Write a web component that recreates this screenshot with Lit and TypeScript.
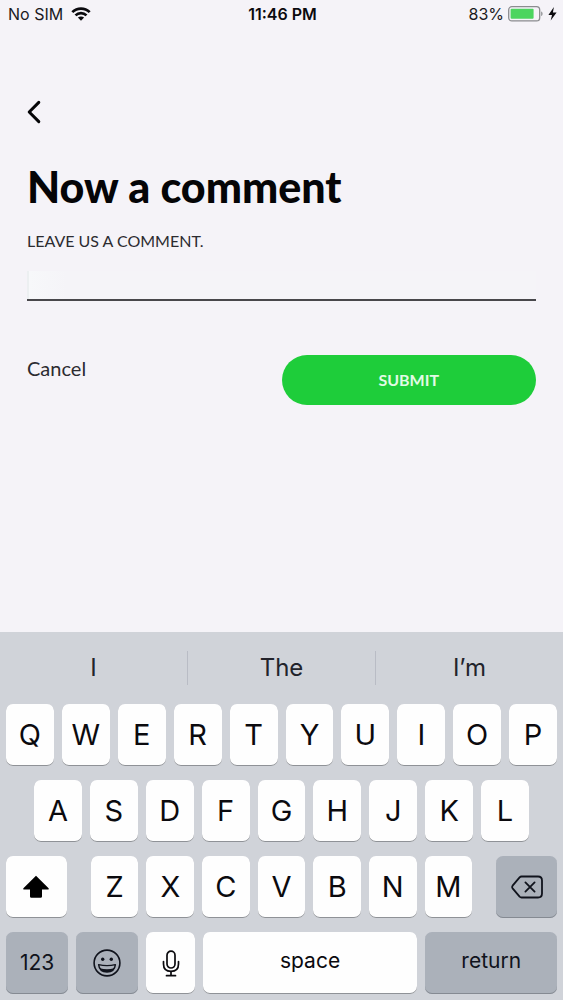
import { LitElement, html, css } from "lit";
import { customElement, property } from "lit/decorators.js";

const wifiIcon = html`<svg class="wifi" viewBox="0 0 20 14" width="20" height="14" aria-hidden="true">
  <g fill="none" stroke="#0b0a0e" stroke-width="2.7">
    <path d="M1.3 5.1C6.2 0.4 13.8 0.4 18.7 5.1" />
    <path d="M4.5 8.4C7.6 5.4 12.4 5.4 15.5 8.4" />
  </g>
  <path d="M6.9 10.6C8.7 9 11.3 9 13.1 10.6L10 13.7Z" fill="#0b0a0e" />
</svg>`;

const batteryIcon = html`<svg viewBox="0 0 36 16" width="36" height="16" aria-hidden="true">
  <rect x="0.7" y="0.7" width="31" height="14.2" rx="3.2" fill="none" stroke="#8b8c8f" stroke-width="1.3" />
  <rect x="2.6" y="2.8" width="23" height="10" rx="1" fill="#4cd55f" />
  <path d="M33.2 5.6c1.8.5 1.8 4 0 4.5z" fill="#8b8c8f" />
</svg>`;

const boltIcon = html`<svg viewBox="0 0 9 14" width="9" height="14" aria-hidden="true">
  <path d="M5.9 0L0.4 7.9H4L2.7 13.6L8.6 5.6H4.9Z" fill="#0b0a0e" />
</svg>`;

const backIcon = html`<svg viewBox="0 0 14 24" width="14" height="24" aria-hidden="true">
  <path d="M11.8 2.4L2.2 12L11.8 21.6" fill="none" stroke="#050507" stroke-width="3" stroke-linecap="round" stroke-linejoin="round" />
</svg>`;

const shiftIcon = html`<svg viewBox="0 0 28 24" width="28" height="24" aria-hidden="true">
  <path d="M14 0.8L26.6 13.3C27 13.8 26.8 14.6 26 14.6H20V21.4Q20 22.8 18.6 22.8H9.4Q8 22.8 8 21.4V14.6H2C1.2 14.6 1 13.8 1.4 13.3Z" fill="#000" />
</svg>`;

const deleteIcon = html`<svg viewBox="0 0 32 24" width="32" height="24" aria-hidden="true">
  <g fill="none" stroke="#10131c" stroke-width="1.8" stroke-linecap="round" stroke-linejoin="round">
    <path d="M10.5 1.5H27Q31 1.5 31 5.5V18.5Q31 22.5 27 22.5H10.5Q9.4 22.5 8.6 21.7L1.6 13.3Q0.7 12 1.6 10.7L8.6 2.3Q9.4 1.5 10.5 1.5Z" />
    <path d="M14.4 7.400L23.600 16.600M23.600 7.400L14.400 16.600" />
  </g>
</svg>`;

const emojiIcon = html`<svg viewBox="0 0 28 28" width="28" height="28" aria-hidden="true">
  <circle cx="14" cy="14" r="12.9" fill="none" stroke="#10131c" stroke-width="1.6" />
  <circle cx="9.7" cy="10.2" r="1.7" fill="#10131c" />
  <circle cx="18.3" cy="10.2" r="1.7" fill="#10131c" />
  <path d="M5.6 15.6Q14 17.6 22.4 15.6C21.9 20.2 18.6 23 14 23S6.1 20.2 5.6 15.6Z" fill="none" stroke="#10131c" stroke-width="1.4" stroke-linejoin="round" />
  <path d="M6.8 19.3Q14 21 21.2 19.3C20 22 17.4 23 14 23S8 22 6.8 19.3Z" fill="#10131c" />
</svg>`;

const micIcon = html`<svg viewBox="0 0 18 27" width="18" height="27" aria-hidden="true">
  <g fill="none" stroke="#0b0a0e" stroke-width="1.7" stroke-linecap="round">
    <rect x="5" y="1.2" width="8" height="16.8" rx="4" />
    <path d="M1.500 11.500V14Q1.500 21.300 9 21.300T16.500 14V11.500" />
    <path d="M9 21.500V25.600M4.500 25.700H13.500" />
  </g>
</svg>`;

@customElement("status-bar")
class StatusBar extends LitElement {
  static styles = css`
    :host {
      display: grid;
      grid-template-columns: 1fr auto 1fr;
      align-items: center;
      height: 28px;
      padding: 0 6px 0 8px;
      font: 400 16px/20px Inter, "Liberation Sans", sans-serif;
      color: #1a1a1e;
    }
    .side {
      display: flex;
      align-items: center;
      gap: 8px;
    }
    .right {
      justify-content: flex-end;
      gap: 4px;
    }
    .time {
      font-weight: 600;
      color: #0b0a0e;
    }
    svg {
      display: block;
    }
  `;
  render() {
    return html`
      <div class="side"><span>No SIM</span>${wifiIcon}</div>
      <span class="time">11:46 PM</span>
      <div class="side right"><span>83%</span>${batteryIcon}${boltIcon}</div>
    `;
  }
}

@customElement("comment-form")
class CommentForm extends LitElement {
  @property() value = "";

  static styles = css`
    :host {
      display: block;
      padding: 72px 27px 32px;
      font-family: Lato, "Open Sans", sans-serif;
      color: #1d1c20;
    }
    button {
      border: 0;
      padding: 0;
      background: none;
      color: inherit;
      font: inherit;
      cursor: pointer;
    }
    svg {
      display: block;
    }
    h1 {
      margin: 34px 0 0;
      font-size: 43px;
      line-height: 52px;
      font-weight: 900;
      color: #050507;
    }
    label {
      display: block;
      margin-top: 18px;
      font-size: 16px;
      line-height: 20px;
      color: #2c2b30;
      text-transform: uppercase;
    }
    input {
      display: block;
      box-sizing: border-box;
      width: 100%;
      height: 30px;
      margin-top: 20px;
      padding: 0 4px;
      border: 0;
      border-bottom: 2px solid #48474b;
      border-radius: 0;
      outline: 0;
      background: linear-gradient(90deg, #eceff1 2px, #f7f8fa 2px, #f5f4f8 40px);
      font: 400 18px/28px Lato, sans-serif;
      color: inherit;
    }
    .actions {
      display: grid;
      grid-template-columns: 1fr 1fr;
      align-items: start;
      margin-top: 54px;
    }
    .cancel {
      justify-self: start;
      font-size: 20px;
      line-height: 26px;
      color: #2c2b30;
    }
    .submit {
      height: 50px;
      padding-bottom: 2px;
      border-radius: 25px;
      background: #1ecd3a;
      color: #e2fbe5;
      font-size: 16px;
      font-weight: 700;
    }
  `;
  render() {
    return html`
      <button class="back" type="button" aria-label="Back">${backIcon}</button>
      <h1>Now a comment</h1>
      <form @submit=${(e: Event) => e.preventDefault()}>
        <label for="comment">Leave us a comment.</label>
        <input id="comment" type="text" autocomplete="off" .value=${this.value} />
        <div class="actions">
          <button class="cancel" type="button">Cancel</button>
          <button class="submit" type="submit">SUBMIT</button>
        </div>
      </form>
    `;
  }
}

@customElement("soft-keyboard")
class SoftKeyboard extends LitElement {
  static styles = css`
    :host {
      display: block;
      padding: 0 6px 6px;
      background: #d0d3d9;
      font-family: Inter, "Liberation Sans", sans-serif;
      color: #0b0a0e;
    }
    button {
      display: flex;
      align-items: center;
      justify-content: center;
      min-width: 0;
      border: 0;
      padding: 0;
      background: none;
      color: inherit;
      font: inherit;
      cursor: pointer;
    }
    svg {
      display: block;
    }
    .suggestions {
      display: flex;
      align-items: center;
      height: 72px;
      margin: 0 -6px;
    }
    .suggestion {
      flex: 1;
      height: 34px;
      font-size: 24px;
      line-height: 32px;
      color: #22232b;
    }
    .suggestion + .suggestion {
      border-left: 1px solid #b9bcc5;
    }
    .rows {
      display: grid;
      gap: 14px;
    }
    .row,
    .letters {
      display: flex;
      gap: 8px;
    }
    .home {
      padding: 0 28px;
    }
    .lower {
      gap: 24px;
    }
    .letters {
      flex: 382;
    }
    .key {
      flex: 1;
      height: 62px;
      border-radius: 7px;
      background: #fefefe;
      box-shadow: inset 0 -1px 0 #8f9297;
      font-size: 29px;
      line-height: 36px;
    }
    .dark {
      background: #abb1ba;
      box-shadow: inset 0 -1px 0 #858a92;
      color: #10131c;
    }
    .word {
      font-size: 21px;
      padding-bottom: 4px;
    }
    .numbers {
      font-size: 21px;
    }
    .side {
      flex: 61;
    }
    .mode {
      flex: 62;
    }
    .mic {
      flex: 48;
    }
    .space {
      flex: 214;
    }
    .return {
      flex: 131;
    }
  `;

  private letters(text: string) {
    return [...text].map((c) => html`<button class="key" type="button">${c}</button>`);
  }

  render() {
    return html`
      <div class="suggestions">
        ${["I", "The", "I’m"].map((w) => html`<button class="suggestion" type="button">${w}</button>`)}
      </div>
      <div class="rows">
        <div class="row">${this.letters("QWERTYUIOP")}</div>
        <div class="row home">${this.letters("ASDFGHJKL")}</div>
        <div class="row lower">
          <button class="key side" type="button" aria-label="Shift">${shiftIcon}</button>
          <div class="letters">${this.letters("ZXCVBNM")}</div>
          <button class="key side dark" type="button" aria-label="Delete">${deleteIcon}</button>
        </div>
        <div class="row">
          <button class="key mode dark numbers" type="button">123</button>
          <button class="key mode dark" type="button" aria-label="Emoji">${emojiIcon}</button>
          <button class="key mic" type="button" aria-label="Dictate">${micIcon}</button>
          <button class="key space word" type="button">space</button>
          <button class="key return dark word" type="button">return</button>
        </div>
      </div>
    `;
  }
}

@customElement("app-root")
class AppRoot extends LitElement {
  static styles = css`
    :host {
      display: flex;
      flex-direction: column;
      min-height: 100vh;
      background: #f5f3f8;
    }
    .content {
      flex: 1;
    }
  `;
  render() {
    return html`
      <status-bar></status-bar>
      <comment-form class="content"></comment-form>
      <soft-keyboard></soft-keyboard>
    `;
  }
}
